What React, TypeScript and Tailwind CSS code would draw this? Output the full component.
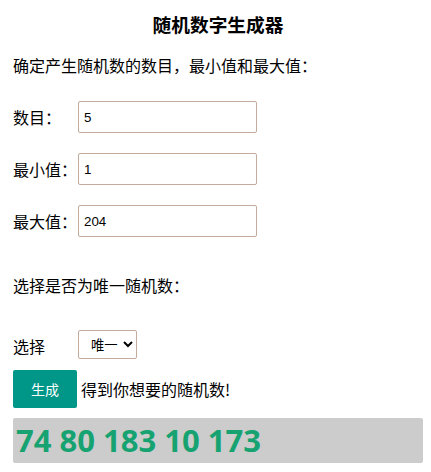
import { useState } from "react";

export default function App() {
  const [count, setCount] = useState("5");
  const [min, setMin] = useState("1");
  const [max, setMax] = useState("204");
  const [unique, setUnique] = useState("yes");
  const [result, setResult] = useState("74 80 183 10 173");

  const generate = () => {
    const n = parseInt(count) || 0;
    const lo = parseInt(min) || 0;
    const hi = parseInt(max) || 0;
    const out: number[] = [];
    let guard = 0;
    while (out.length < n && guard < 10000) {
      guard++;
      const v = Math.floor(Math.random() * (hi - lo + 1)) + lo;
      if (unique === "yes" && out.includes(v)) continue;
      out.push(v);
    }
    setResult(out.join(" "));
  };

  const inputCls =
    "w-[179px] h-[32px] border border-[#c4ab9c] rounded-[2px] px-[5px] text-[13.33px] font-['Liberation_Sans',sans-serif] text-black outline-none";

  return (
    <div className="min-h-screen bg-white pl-[13px] pr-[8px] text-[16px] text-black font-['Noto_Sans_CJK_SC','Noto_Sans',sans-serif]">
      <h3 className="pt-[10px] h-[38px] leading-[28px] text-center text-[18.7px] font-bold">
        随机数字生成器
      </h3>

      <p className="mt-[15px] leading-[24px]">确定产生随机数的数目，最小值和最大值：</p>

      {/* number inputs */}
      <div className="mt-[24px] flex items-center">
        <span className="w-[65px] leading-[24px]">数目：</span>
        <input className={inputCls} value={count} onChange={(e) => setCount(e.target.value)} />
      </div>
      <div className="mt-[20px] flex items-center">
        <span className="w-[65px] leading-[24px]">最小值：</span>
        <input className={inputCls} value={min} onChange={(e) => setMin(e.target.value)} />
      </div>
      <div className="mt-[20px] flex items-center">
        <span className="w-[65px] leading-[24px]">最大值：</span>
        <input className={inputCls} value={max} onChange={(e) => setMax(e.target.value)} />
      </div>

      <p className="mt-[36px] leading-[24px]">选择是否为唯一随机数：</p>

      <div className="mt-[33px] flex items-center">
        <span className="w-[65px] leading-[24px] pt-[2px]">选择</span>
        <select
          value={unique}
          onChange={(e) => setUnique(e.target.value)}
          className="w-[59px] h-[29px] border border-[#c4ab9c] rounded-[2px] bg-white pl-[8px] text-[13.33px] text-black outline-none"
        >
          <option value="yes">唯一</option>
          <option value="no">不唯一</option>
        </select>
      </div>

      <div className="mt-[11px] flex items-center">
        <button
          onClick={generate}
          className="w-[64px] h-[38px] bg-[#009688] text-white text-[14px] rounded-[2px]"
        >
          生成
        </button>
        <span className="ml-[4px] leading-[24px]">得到你想要的随机数!</span>
      </div>

      <div className="mt-[10px] h-[45px] bg-[#cccccc] rounded-[2px] flex items-center pl-[3px]">
        <span className="text-[31px] font-bold text-[#17a371] font-['Open_Sans',sans-serif] leading-none">
          {result}
        </span>
      </div>
    </div>
  );
}
